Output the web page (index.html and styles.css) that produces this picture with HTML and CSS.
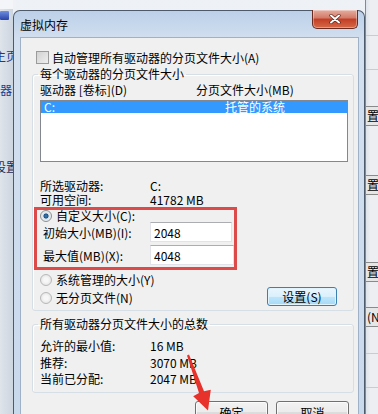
FILE: index.html
```html
<!DOCTYPE html>
<html lang="zh-CN">
<head>
    <meta charset="UTF-8">
    <meta name="viewport" content="width=device-width, initial-scale=1.0">
    <title>虚拟内存</title>
    <link rel="stylesheet" href="styles.css">
</head>
<body>
    <div class="screen">
        <div class="bg-left">
            <span class="bg-icon"></span>
            <span class="bg-link first">主页</span>
            <span class="bg-link second">器</span>
            <span class="bg-text">设置</span>
        </div>

        <div class="dialog">
            <div class="titlebar">
                <span class="title">虚拟内存</span>
                <button class="close" aria-label="关闭">
                    <svg width="12" height="10" viewBox="0 0 12 10">
                        <path d="M2 1.5 L10 8.5 M10 1.5 L2 8.5" stroke="#5a1d12" stroke-width="3.2" stroke-linecap="round"/>
                        <path d="M2 1.5 L10 8.5 M10 1.5 L2 8.5" stroke="#fff" stroke-width="2" stroke-linecap="round"/>
                    </svg>
                </button>
            </div>

            <div class="client">
                <label class="check-row"><span class="checkbox"></span>自动管理所有驱动器的分页文件大小(A)</label>

                <fieldset class="group group-drive">
                    <legend>每个驱动器的分页文件大小</legend>
                    <div class="list-head">
                        <span>驱动器 [卷标](D)</span>
                        <span>分页文件大小(MB)</span>
                    </div>
                    <div class="listbox">
                        <div class="list-row selected"><span>C:</span><span>托管的系统</span></div>
                    </div>
                    <div class="info">
                        <span>所选驱动器:</span><span>C:</span>
                        <span>可用空间:</span><span>41782 MB</span>
                    </div>

                    <div class="custom-box">
                        <div class="radio-row"><span class="radio checked"></span>自定义大小(C):</div>
                        <div class="field-row">
                            <span>初始大小(MB)(I):</span>
                            <input class="textbox" type="text" value="2048">
                        </div>
                        <div class="field-row second">
                            <span>最大值(MB)(X):</span>
                            <input class="textbox wide" type="text" value="4048">
                        </div>
                    </div>

                    <div class="options">
                        <div class="option-list">
                            <div class="radio-row"><span class="radio"></span>系统管理的大小(Y)</div>
                            <div class="radio-row"><span class="radio"></span>无分页文件(N)</div>
                        </div>
                        <button class="btn btn-focus">设置(S)</button>
                    </div>
                </fieldset>

                <fieldset class="group group-total">
                    <legend>所有驱动器分页文件大小的总数</legend>
                    <div class="totals">
                        <span>允许的最小值:</span><span>16 MB</span>
                        <span>推荐:</span><span>3070 MB</span>
                        <span>当前已分配:</span><span>2047 MB</span>
                    </div>
                </fieldset>

                <div class="actions">
                    <button class="btn">确定</button>
                    <button class="btn">取消</button>
                </div>
            </div>
        </div>

        <div class="bg-right">
            <span class="bg-line top"></span>
            <span class="bg-line"></span>
            <span class="bg-btn first">置(</span>
            <span class="bg-btn second">置(</span>
            <span class="bg-btn third">置(</span>
            <span class="bg-btn fourth">(N</span>
            <span class="bg-line low"></span>
            <span class="bg-line"></span>
        </div>
    </div>

    <!-- annotation arrow pointing at the OK button -->
    <svg class="arrow" width="40" height="64" viewBox="0 0 40 64">
        <polygon points="7,5.4 9,4.6 24,41.2 30.8,39.8 28,60.5 13.2,46.3 19,43" fill="#e6322b"/>
    </svg>
</body>
</html>
```

FILE: styles.css
```css
body {
    margin: 0;
    width: 378px;
    height: 414px;
    overflow: hidden;
    position: relative;
    font-family: "Noto Sans CJK SC", "Liberation Sans", sans-serif;
    font-size: 12px;
    color: #000;
    background: linear-gradient(#eef1f5, #e2e7ee);
}

.screen {
    display: grid;
    grid-template-columns: 13px 352px 13px;
    height: 414px;
}

/* Window behind, left side */
.bg-left {
    display: flex;
    flex-direction: column;
    overflow: hidden;
    background: linear-gradient(to right, #dfe4eb, #cdd5df);
    border-top: 9px solid #f3f5f8;
}

.bg-icon {
    width: 9px;
    height: 9px;
    margin-top: 2px;
    background: linear-gradient(#6f8fe0, #2a44a8);
    border-radius: 1px;
}

.bg-link,
.bg-text {
    white-space: nowrap;
    line-height: 12px;
    margin-left: -6px;
    color: #1d3a8c;
}

.bg-link.first { margin-top: 30px; }
.bg-link.second { margin-top: 22px; margin-left: 0; }
.bg-text { margin-top: 65px; color: #1c2b55; }

/* Dialog frame */
.dialog {
    margin-top: 10px;
    display: flex;
    flex-direction: column;
    border: 1px solid #4c5a6c;
    border-bottom: none;
    border-radius: 7px 7px 0 0;
    background: linear-gradient(#bcd0e8, #d3e0f0 30px, #c9d9ec);
    padding: 0 5px 0 6px;
}

.titlebar {
    height: 26px;
    display: flex;
    justify-content: space-between;
    align-items: center;
}

.title {
    line-height: 14px;
    margin-top: 1px;
}

.close {
    align-self: flex-start;
    width: 46px;
    height: 19px;
    margin: -1px 1px 0 0;
    padding: 0;
    display: flex;
    align-items: center;
    justify-content: center;
    border: 1px solid #6a2b21;
    border-top: none;
    border-radius: 0 0 5px 5px;
    background: linear-gradient(#e6ad9f, #d27a67 45%, #c23d24 50%, #d56a48);
    box-shadow: inset 0 0 0 1px rgba(255, 255, 255, 0.35);
}

.client {
    flex: 1;
    background: #f0f0f0;
    border: 1px solid #9fb1c6;
    border-bottom: none;
    padding-top: 13px;
}

.check-row {
    display: flex;
    align-items: center;
    height: 13px;
    line-height: 13px;
    white-space: nowrap;
}

.checkbox {
    width: 11px;
    height: 11px;
    margin: 0 3px 0 15px;
    border: 1px solid #9b9b9b;
    background: linear-gradient(135deg, #d2d2d2, #eeeeee);
}

/* Group boxes */
.group {
    margin: 4px 0 0 11px;
    width: 322px;
    box-sizing: border-box;
    border: 1px solid #d5dfe5;
    border-radius: 3px;
    padding: 0 0 6px 7px;
    box-shadow: inset 1px 1px 0 #fff;
}

.group legend {
    padding: 0 2px;
    margin-left: -2px;
    line-height: 12px;
}

.list-head {
    display: grid;
    grid-template-columns: 156px auto;
    margin-top: 4px;
    line-height: 12px;
}

.listbox {
    margin-top: 4px;
    width: 308px;
    height: 62px;
    box-sizing: border-box;
    border: 1px solid #828790;
    background: #fff;
}

.list-row {
    display: grid;
    grid-template-columns: 181px auto;
    padding-left: 3px;
    line-height: 12px;
}

.list-row.selected {
    background: #3399ff;
    color: #fff;
}

.info {
    display: grid;
    grid-template-columns: 110px auto;
    margin-top: 17px;
    line-height: 13.5px;
}

/* Red annotation box around the custom size controls */
.custom-box {
    margin: 1px 0 0 -6px;
    width: 203px;
    height: 63px;
    box-sizing: border-box;
    border: 3px solid #dc4a4a;
}

.radio-row {
    display: flex;
    align-items: center;
    height: 12px;
    line-height: 12px;
    white-space: nowrap;
}

.custom-box .radio-row {
    padding-left: 3px;
}

.radio {
    width: 10px;
    height: 10px;
    margin-right: 4px;
    border: 1px solid #b8b8b8;
    border-radius: 50%;
    background: radial-gradient(circle, #f7f7f7 30%, #dcdcdc 100%);
}

.radio.checked {
    border-color: #8e8f8f;
    background: radial-gradient(circle, #3b7fb6 0, #1e5588 30%, #dde6ec 42%, #f4f4f4 100%);
}

.field-row {
    display: grid;
    grid-template-columns: 107px auto;
    align-items: center;
    padding-left: 6px;
    height: 20px;
}

.field-row.second {
    margin-top: 3px;
}

.textbox {
    width: 82px;
    height: 20px;
    box-sizing: border-box;
    margin: 0;
    padding: 0 3px;
    font: 12px "Noto Sans CJK SC", "Liberation Sans", sans-serif;
    color: #000;
    background: #fff;
    border: 1px solid #e2e3ea;
    border-top-color: #abadb3;
}

.textbox.wide {
    width: 84px;
}

.options {
    display: flex;
    justify-content: space-between;
    align-items: flex-end;
    margin-top: 4px;
}

.option-list {
    display: flex;
    flex-direction: column;
    gap: 6px;
}

/* Buttons */
.btn {
    width: 73px;
    height: 23px;
    padding: 0;
    font: 12px "Noto Sans CJK SC", "Liberation Sans", sans-serif;
    color: #000;
    border: 1px solid #707070;
    border-radius: 3px;
    background: linear-gradient(#f2f2f2, #ebebeb 50%, #dddddd 50%, #cfcfcf);
    box-shadow: inset 0 0 0 1px rgba(255, 255, 255, 0.7);
}

.btn-focus {
    width: 70px;
    height: 19px;
    line-height: 15px;
    margin: 0 16px -2px 0;
    border-color: #3c7fb1;
    background: linear-gradient(#eaf6fd, #d9f0fc 50%, #bee6fd 50%, #a7d9f5);
    box-shadow: inset 0 0 0 1px #e1f4fd;
}

.group-total {
    margin-top: 7px;
    padding-bottom: 4px;
}

.totals {
    display: grid;
    grid-template-columns: 110px auto;
    margin-top: 8px;
    line-height: 16.5px;
}

.actions {
    display: flex;
    justify-content: flex-end;
    gap: 8px;
    margin-top: 8px;
    padding-right: 9px;
}

/* Window behind, right side */
.bg-right {
    display: flex;
    flex-direction: column;
    overflow: hidden;
    background: linear-gradient(to right, #dde3ea, #eceef1 4px);
    border-left: 1px solid #7d8a99;
}

.bg-line {
    height: 1px;
    background: #c9cdd2;
    margin-top: 33px;
}

.bg-line.top { margin-top: 35px; }
.bg-line.low { margin-top: 26px; }

.bg-btn {
    height: 18px;
    line-height: 18px;
    white-space: nowrap;
    padding-left: 1px;
    border-top: 1px solid #8a8a8a;
    border-bottom: 1px solid #8a8a8a;
    background: #e6e6e6;
}

.bg-btn.first { margin-top: 36px; }
.bg-btn.second { margin-top: 49px; }
.bg-btn.third { margin-top: 67px; }
.bg-btn.fourth { margin-top: 25px; }

/* Annotation */
.arrow {
    position: absolute;
    left: 180px;
    top: 350px;
}
```
